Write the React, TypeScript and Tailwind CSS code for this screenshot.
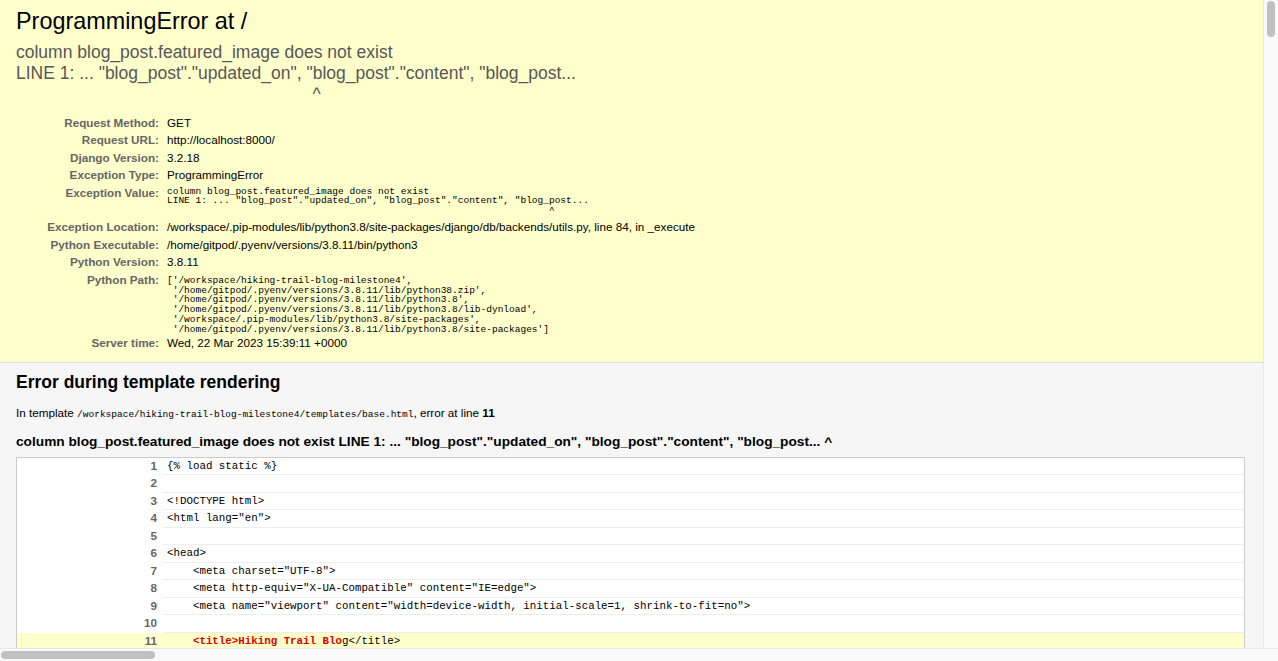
import React from 'react';

const sans = "font-['Liberation_Sans',Arial,sans-serif]";
const mono = "font-['Liberation_Mono','Courier_New',monospace]";

const pythonPath = [
  "['/workspace/hiking-trail-blog-milestone4',",
  " '/home/gitpod/.pyenv/versions/3.8.11/lib/python38.zip',",
  " '/home/gitpod/.pyenv/versions/3.8.11/lib/python3.8',",
  " '/home/gitpod/.pyenv/versions/3.8.11/lib/python3.8/lib-dynload',",
  " '/workspace/.pip-modules/lib/python3.8/site-packages',",
  " '/home/gitpod/.pyenv/versions/3.8.11/lib/python3.8/site-packages']",
];

const source: [number, string][] = [
  [1, '{% load static %}'],
  [2, ''],
  [3, '<!DOCTYPE html>'],
  [4, '<html lang="en">'],
  [5, ''],
  [6, '<head>'],
  [7, '    <meta charset="UTF-8">'],
  [8, '    <meta http-equiv="X-UA-Compatible" content="IE=edge">'],
  [9, '    <meta name="viewport" content="width=device-width, initial-scale=1, shrink-to-fit=no">'],
  [10, ''],
];

function MetaRow({ label, children, tall }: { label: string; children: React.ReactNode; tall?: string }) {
  return (
    <div className={`grid grid-cols-[143px_1fr] gap-2 ${tall ?? 'h-[17.5px]'}`}>
      <div className="pt-[2px] text-right text-[11.7px] leading-[13.5px] font-bold text-[#666]">{label}</div>
      <div className="pt-[2px] text-[11.7px] leading-[13.5px] text-black">{children}</div>
    </div>
  );
}

function MonoBlock({ lines }: { lines: string[] }) {
  return (
    <pre className={`${mono} text-[9.5px] leading-[9.7px] whitespace-pre text-black`}>
      {lines.join('\n')}
    </pre>
  );
}

export default function App() {
  return (
    <div className={`${sans} w-[1278px] h-[661px] flex flex-col overflow-hidden bg-[#fafafa]`}>
      <div className="flex flex-1 min-h-0">
        <main className="w-[1263px] overflow-hidden bg-white">
          {/* Summary */}
          <section className="bg-[#ffc] border-b border-[#ddd] pl-4 pr-[18px] pt-[8px] pb-[10px]">
            <h1 className="text-[23.4px] leading-[27px] font-normal text-black">ProgrammingError at /</h1>
            <pre className={`${sans} mt-[7px] text-[17.5px] leading-[21px] text-[#575757] whitespace-pre`}>
              {'column blog_post.featured_image does not exist\nLINE 1: ... "blog_post"."updated_on", "blog_post"."content", "blog_post...\n' +
                ' '.repeat(61) +
                '^'}
            </pre>
            <div className="mt-[8.5px] flex flex-col">
              <MetaRow label="Request Method:">GET</MetaRow>
              <MetaRow label="Request URL:">http://localhost:8000/</MetaRow>
              <MetaRow label="Django Version:">3.2.18</MetaRow>
              <MetaRow label="Exception Type:">ProgrammingError</MetaRow>
              <MetaRow label="Exception Value:" tall="h-[34.5px]">
                <div className="mt-[1px]">
                  <MonoBlock
                    lines={[
                      'column blog_post.featured_image does not exist',
                      'LINE 1: ... "blog_post"."updated_on", "blog_post"."content", "blog_post...',
                      ' '.repeat(67) + '^',
                    ]}
                  />
                </div>
              </MetaRow>
              <MetaRow label="Exception Location:">
                /workspace/.pip-modules/lib/python3.8/site-packages/django/db/backends/utils.py, line 84, in _execute
              </MetaRow>
              <MetaRow label="Python Executable:">/home/gitpod/.pyenv/versions/3.8.11/bin/python3</MetaRow>
              <MetaRow label="Python Version:">3.8.11</MetaRow>
              <MetaRow label="Python Path:" tall="h-[63.5px]">
                <div className="pt-[3.5px]">
                  <MonoBlock lines={pythonPath} />
                </div>
              </MetaRow>
              <MetaRow label="Server time:">Wed, 22 Mar 2023 15:39:11 +0000</MetaRow>
            </div>
          </section>

          {/* Template error */}
          <section className="bg-[#f6f6f6] pl-4 pr-[18px] pt-[9px]">
            <h2 className="text-[17.5px] leading-[20px] font-bold text-black">Error during template rendering</h2>
            <p className="mt-[14px] text-[11.7px] leading-[13.5px] text-black">
              In template{' '}
              <code className={`${mono} text-[9.5px]`}>/workspace/hiking-trail-blog-milestone4/templates/base.html</code>, error
              at line <strong>11</strong>
            </p>
            <h3 className="mt-[12.7px] mb-[7px] text-[13.7px] leading-[16px] font-bold text-black">
              column blog_post.featured_image does not exist LINE 1: ... "blog_post"."updated_on", "blog_post"."content",
              "blog_post... ^
            </h3>
            <div className="border border-[#ccc] bg-white">
              {source.map(([n, code]) => (
                <div key={n} className="flex h-[17.5px]">
                  <div className="w-[146px] shrink-0 pr-[6px] pt-[1px] text-right text-[11.7px] leading-[13.5px] font-bold text-[#666]">
                    {n}
                  </div>
                  <div
                    className={`${mono} flex-1 pl-[4px] pt-[2px] text-[10.8px] leading-[12px] whitespace-pre text-black border-b border-[#eee]`}
                  >
                    {code}
                  </div>
                </div>
              ))}
              <div className="flex h-[17.5px] bg-[#ffc]">
                <div className="w-[146px] shrink-0 pr-[6px] pt-[1px] text-right text-[11.7px] leading-[13.5px] font-bold text-[#666]">
                  11
                </div>
                <div className={`${mono} flex-1 pl-[4px] pt-[2px] text-[10.8px] leading-[12px] whitespace-pre text-black`}>
                  {'    '}
                  <span className="font-bold text-[#dd0000]">{'<title>Hiking Trail Blo'}</span>
                  {'g</title>'}
                </div>
              </div>
              <div className="h-[40px]" />
            </div>
          </section>
        </main>
        {/* vertical scrollbar */}
        <div className="w-[15px] shrink-0 border-l border-[#e8e8e8] bg-[#fafafa] pt-[1px] pl-[3px]">
          <div className="w-[8px] h-[36px] rounded-full bg-[#c1c1c1]" />
        </div>
      </div>
      {/* horizontal scrollbar */}
      <div className="h-[13px] shrink-0 border-t border-[#e8e8e8] bg-[#fafafa] pt-[2px] pl-[1px]">
        <div className="w-[154px] h-[8px] rounded-full bg-[#c1c1c1]" />
      </div>
    </div>
  );
}
